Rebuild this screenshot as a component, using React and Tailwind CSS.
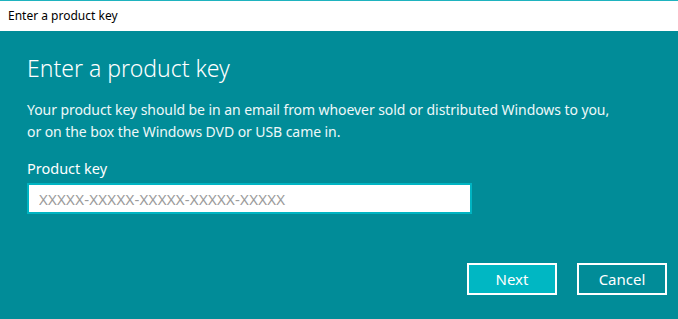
import React from "react";

const font = { fontFamily: '"Noto Sans", "Open Sans", sans-serif' };

export default function App() {
  return (
    <div className="w-[678px] h-[319px] flex flex-col bg-[#018c98] overflow-hidden" style={font}>
      {/* title bar */}
      <div className="border-t border-[#1fb3bf] bg-white h-[31px] flex items-center px-2 text-[12px] text-black">
        Enter a product key
      </div>

      <div className="flex-1 flex flex-col text-white">
        <div className="flex flex-col px-[27px] pt-[21px]">
          <h1 className="text-[23px] leading-[32px] font-light">Enter a product key</h1>
          <p className="mt-[15px] text-[14px] leading-[22px] tracking-[-0.07px] text-[#eef8f9] whitespace-nowrap">
            Your product key should be in an email from whoever sold or distributed Windows to you,
            <br />
            or on the box the Windows DVD or USB came in.
          </p>

          <label className="mt-[15px] text-[14.5px] leading-[20px]">Product key</label>
          <input
            className="mt-[5px] w-[445px] h-[31px] bg-white border-2 border-[#00b4c2] px-[10px] text-[15px] tracking-[0.25px] text-gray-700 placeholder:text-[#9b9b9b] outline-none"
            placeholder="XXXXX-XXXXX-XXXXX-XXXXX-XXXXX"
            style={font}
          />
        </div>

        {/* actions */}
        <div className="mt-auto mb-[24px] pr-[11px] flex justify-end gap-[20px]">
          <button className="w-[90px] h-[32px] border-2 border-white bg-[#00b7c3] text-[15px] text-white">
            Next
          </button>
          <button className="w-[90px] h-[32px] border-2 border-white bg-[#018c98] text-[15px] text-white">
            Cancel
          </button>
        </div>
      </div>
    </div>
  );
}
